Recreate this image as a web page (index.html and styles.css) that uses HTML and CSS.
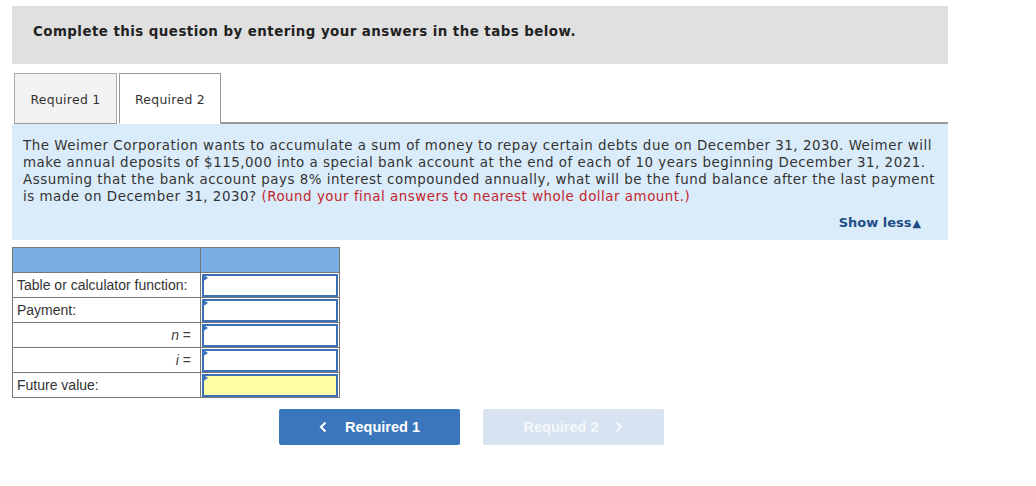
FILE: index.html
```html
<!DOCTYPE html>
<html>
<head>
<meta charset="utf-8">
<link rel="stylesheet" href="styles.css">
</head>
<body>
<div class="page">
  <div class="banner">Complete this question by entering your answers in the tabs below.</div>
  <div class="tabs">
    <div class="tab">Required 1</div>
    <div class="tab active">Required 2</div>
    <div class="tab-fill"></div>
  </div>
  <div class="question">
    <p class="qtext">The Weimer Corporation wants to accumulate a sum of money to repay certain debts due on December 31, 2030. Weimer will make annual deposits of $115,000 into a special bank account at the end of each of 10 years beginning December 31, 2021. Assuming that the bank account pays 8% interest compounded annually, what will be the fund balance after the last payment is made on December 31, 2030? <span class="red">(Round your final answers to nearest whole dollar amount.)</span></p>
    <div class="showless">Show less<span class="tri">&#9650;</span></div>
  </div>
  <table class="grid">
    <tr class="head"><td class="lab"></td><td class="inp"></td></tr>
    <tr><td class="lab">Table or calculator function:</td><td class="inp"><div class="box"></div></td></tr>
    <tr><td class="lab">Payment:</td><td class="inp"><div class="box"></div></td></tr>
    <tr><td class="lab right"><i>n</i> =</td><td class="inp"><div class="box"></div></td></tr>
    <tr><td class="lab right"><i>i</i> =</td><td class="inp"><div class="box"></div></td></tr>
    <tr><td class="lab">Future value:</td><td class="inp"><div class="box yellow"></div></td></tr>
  </table>
  <div class="nav">
    <div class="btn prev"><svg class="chev left" width="8" height="12" viewBox="0 0 8 12"><path d="M6.5 1.5 L2 6 L6.5 10.5" fill="none" stroke="currentColor" stroke-width="2.2"/></svg>Required 1</div>
    <div class="btn next disabled">Required 2<svg class="chev right" width="8" height="12" viewBox="0 0 8 12"><path d="M1.5 1.5 L6 6 L1.5 10.5" fill="none" stroke="currentColor" stroke-width="2.2"/></svg></div>
  </div>
</div>
</body>
</html>
```
FILE: styles.css
```css
html, body { margin: 0; padding: 0; background: #fff; }
body { font-family: "DejaVu Sans", Verdana, sans-serif; color: #333; }
.page { width: 936px; padding: 6px 0 0 12px; }
.banner {
  background: #e0e0e0;
  height: 58px;
  box-sizing: border-box;
  padding: 18px 0 0 21px;
  font-weight: bold;
  font-size: 13.4px;
  letter-spacing: 0.45px;
  color: #222;
}
.tabs { display: flex; margin-top: 9px; height: 51px; align-items: stretch; }
.tab {
  box-sizing: border-box;
  margin-left: 2px;
  width: 103px;
  border: 1px solid #aaa;
  border-bottom: 1px solid #999;
  background: #f2f2f2;
  font-size: 12.4px;
  letter-spacing: 0.3px;
  color: #333;
  display: flex; align-items: center; justify-content: center;
  padding-top: 2px;
}
.tab.active { background: #fff; width: 102px; border-color: #999; border-bottom-color: #fff; }
.tab-fill { flex: 1; border-bottom: 2px solid #999; }
.question {
  background: #daebf9;
  padding: 13px 6px 10px 11px;
}
.qtext { margin: 0; font-size: 13.4px; letter-spacing: 0.52px; line-height: 17px; color: #333; }
.red { color: #c3252c; }
.showless {
  text-align: right;
  font-weight: bold;
  font-size: 13px;
  color: #1e4d86;
  margin-top: 10px;
  padding-right: 21px;
}
.tri { font-size: 11px; margin-left: 1px; }
.grid {
  border-collapse: collapse;
  margin-top: 7px;
  font-family: "Liberation Sans", Arial, sans-serif;
  font-size: 14px;
  color: #333;
}
.grid td { border: 1px solid #777; height: 25px; padding: 0; box-sizing: border-box; }
.grid .lab { width: 188px; padding: 0 4px; }
.grid .lab.right { text-align: right; padding-right: 9px; color: #444; }
.grid .inp { width: 139px; padding: 1px 1px 0 1px; position: relative; }
.grid .head td { background: #79ade3; }
.box {
  height: 23px;
  border: 2px solid #3d6fb4;
  box-sizing: border-box;
  background: #fff;
}
.box.yellow { background: #ffffa6; }
.inp .box::before {
  content: "";
  position: absolute;
  left: 1px; top: 1px;
  border-left: 6px solid #3a72bd;
  border-top: 4px solid transparent;
  border-bottom: 4px solid transparent;
}
.nav { display: flex; gap: 23px; margin-top: 11px; padding-left: 267px; }
.btn {
  width: 181px; height: 36px;
  border-radius: 2px;
  font-family: "Liberation Sans", Arial, sans-serif;
  font-weight: bold;
  font-size: 14.5px;
  color: #fff;
  display: flex; align-items: center; justify-content: center;
}
.prev { background: #3a76bb; }
.disabled { background: #d8e3f1; color: #f4f7fb; }
.chev.left { margin-right: 18px; }
.chev.right { margin-left: 17px; }
```
